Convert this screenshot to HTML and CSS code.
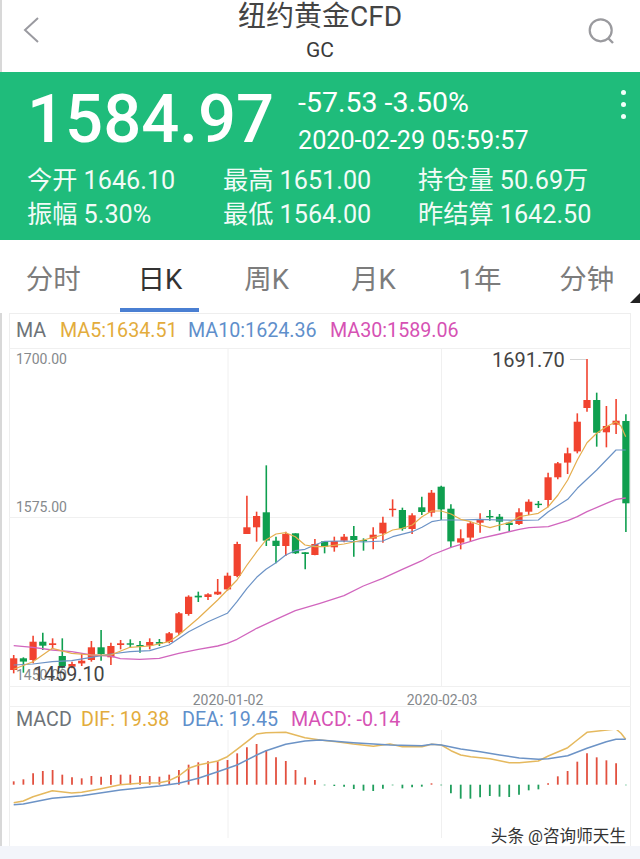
FILE: index.html
```html
<!DOCTYPE html>
<html lang="zh">

<head>
	<meta charset="utf-8">
	<title>纽约黄金CFD</title>
	<link rel="stylesheet" href="styles.css">
</head>

<body>
	<div class="cabecera">
		<svg class="icono" width="44" height="44" viewBox="0 0 44 44">
			<path d="M28 9 L15 21 L28 33" fill="none" stroke="#9A9AA0" stroke-width="2"/>
		</svg>
		<div class="titulo">
			<div class="nombre">纽约黄金CFD</div>
			<div class="codigo">GC</div>
		</div>
		<svg class="icono" width="44" height="44" viewBox="0 0 44 44">
			<circle cx="14.7" cy="21.3" r="11" fill="none" stroke="#9A9A9E" stroke-width="2.2"/>
			<path d="M22 29 L27 34" fill="none" stroke="#9A9A9E" stroke-width="2.4"/>
		</svg>
	</div>

	<div class="cotizacion">
		<div class="fila-precio">
			<div class="precio">1584.97</div>
			<div class="cambio">
				<div class="variacion">-57.53 -3.50%</div>
				<div class="fecha">2020-02-29 05:59:57</div>
			</div>
			<div class="puntos"><i></i><i></i><i></i></div>
		</div>
		<div class="datos">
			<div>今开 1646.10</div>
			<div>最高 1651.00</div>
			<div>持仓量 50.69万</div>
			<div>振幅 5.30%</div>
			<div>最低 1564.00</div>
			<div>昨结算 1642.50</div>
		</div>
	</div>

	<div class="pestanas">
		<div>分时</div>
		<div class="activa">日K</div>
		<div>周K</div>
		<div>月K</div>
		<div>1年</div>
		<div>分钟</div>
		<span class="esquina"></span>
	</div>

	<div class="zona">
		<div class="tarjeta">
			<div class="leyenda ma">
				<span class="gris">MA</span>
				<span class="naranja">MA5:1634.51</span>
				<span class="azul">MA10:1624.36</span>
				<span class="rosa">MA30:1589.06</span>
			</div>
			<svg id="velas" class="grafico" width="622" height="359" viewBox="9 348 622 359"></svg>
			<div class="leyenda macd">
				<span class="gris">MACD</span>
				<span class="naranja">DIF: 19.38</span>
				<span class="azul">DEA: 19.45</span>
				<span class="rosa">MACD: -0.14</span>
			</div>
			<svg id="macd" class="grafico" width="622" height="108" viewBox="9 730 622 108"></svg>
			<div class="marca">头条 @咨询师天生</div>
		</div>
	</div>

	<script src="chart.js"></script>
</body>

</html>
```

FILE: styles.css
```css
body {
	margin: 0;
	width: 640px;
	height: 859px;
	overflow: hidden;
	background-color: #F3F5FA;
	color: #333333;
	font-family: Roboto, "Noto Sans CJK SC", sans-serif;
}

.cabecera {
	height: 72px;
	display: flex;
	justify-content: space-between;
	align-items: flex-start;
	padding: 0 10px 0 8px;
	background-color: #FFFFFF;
	border-left: 2px solid #D8D8D8;
	box-sizing: border-box;
}

.icono {
	margin-top: 9px;
}

.titulo {
	text-align: center;
}

.nombre {
	font-size: 28px;
	line-height: 34px;
	color: #444444;
}

.codigo {
	font-size: 21px;
	line-height: 33px;
	color: #3A3A3A;
}

.cotizacion {
	height: 168px;
	box-sizing: border-box;
	padding: 8px 0 0 27px;
	background-color: #1FBC7B;
	color: #FFFFFF;
}

.fila-precio {
	display: flex;
	height: 80px;
}

.precio {
	width: 271px;
	font-size: 67px;
	font-weight: 500;
	line-height: 78px;
}

.cambio {
	width: 323px;
	padding-top: 3px;
}

.variacion {
	font-size: 28.5px;
	line-height: 40px;
}

.fecha {
	font-size: 25.2px;
	line-height: 35px;
}

.puntos {
	display: flex;
	flex-direction: column;
	gap: 7px;
	padding-top: 10px;
}

.puntos i {
	display: block;
	width: 5px;
	height: 5px;
	border-radius: 50%;
	background-color: #F2FFF9;
}

.datos {
	display: grid;
	grid-template-columns: 196px 195px 1fr;
	grid-auto-rows: 34px;
	margin-top: 4px;
	font-size: 25.2px;
	line-height: 34px;
	color: #F2FBF7;
}

.pestanas {
	position: relative;
	height: 73px;
	display: grid;
	grid-template-columns: repeat(6, 1fr);
	background-color: #FFFFFF;
	font-size: 27.5px;
	line-height: 80px;
	text-align: center;
	color: #7C7C7C;
}

.pestanas .activa {
	color: #333333;
}

.pestanas .activa::after {
	content: "";
	display: block;
	width: 79px;
	height: 4px;
	margin: -12px auto 0;
	background-color: #4A7FD2;
}

.esquina {
	position: absolute;
	right: 0;
	bottom: 10px;
	border-left: 10px solid transparent;
	border-bottom: 10px solid #222222;
}

.zona {
	height: 533px;
	box-sizing: border-box;
	padding: 0 9px 0 7px;
	background-color: #FFFFFF;
	border-left: 2px solid #D8D8D8;
}

.tarjeta {
	position: relative;
	height: 533px;
	box-sizing: border-box;
	border: 1px solid #EEEEEE;
	border-bottom: 0;
	background-color: #FFFFFF;
}

.leyenda {
	display: flex;
	padding-left: 6px;
	font-size: 19.7px;
	white-space: nowrap;
}

.leyenda.ma {
	height: 34px;
	line-height: 34px;
}

.leyenda.macd {
	height: 23px;
	line-height: 26px;
}

.ma .gris { width: 44px; }
.ma .naranja { width: 128px; }
.ma .azul { width: 142px; }

.macd .gris { width: 65px; }
.macd .naranja { width: 101px; }
.macd .azul { width: 109px; }

.gris { color: #6E7378; }
.naranja { color: #E3AC3C; }
.azul { color: #5F8FCB; }
.rosa { color: #D652B4; }

.grafico {
	display: block;
	margin-left: -1px;
}

.grafico text {
	font-family: Roboto, sans-serif;
}

.marca {
	position: absolute;
	right: 4px;
	bottom: -1px;
	font-size: 16.6px;
	line-height: 20px;
	color: #333333;
	text-shadow: 0 0 2px #FFFFFF;
}
```

FILE: chart.js
```js
// coordenadas leidas de la imagen, escala x3
var PASO = 29.15;
var ROJO = "#F1432F", VERDE = "#0F9F4F";

// [r/v, mecha arriba, mecha abajo, cuerpo arriba, cuerpo abajo]
var velas = [
	["r",945,1000,955,990],["v",952,998,955,965],["r",887,970,905,960],["v",878,930,905,917],
	["r",895,925,910,915],["v",895,985,948,978],["r",965,985,972,980],["r",940,978,962,970],
	["r",903,965,922,960],["v",870,962,922,942],["r",908,975,918,952],["r",900,928,910,915],
	["v",898,922,910,914],["v",903,938,915,920],["r",895,928,906,917],["v",897,918,906,911],
	["r",876,910,880,906],["r",816,885,820,878],["r",766,827,770,822],["v",755,786,767,772],
	["r",760,780,763,771],["r",717,765,755,763],["r",698,752,707,748],["r",605,712,612,708],
	["r",467,582,562,582],["r",515,605,528,562],["v",376,618,517,602],["v",590,670,602,618],
	["r",575,648,582,618],["v",580,642,580,640],["v",637,688,637,642],["r",597,646,612,645],
	["v",604,640,604,620],["r",590,635,603,622],["r",582,607,590,602],["v",558,650,588,600],
	["v",595,632,600,604],["r",562,628,584,596],["r",530,608,548,580],["r",478,530,506,509],
	["v",503,572,510,566],["r",520,582,526,567],["v",470,525,502,516],["r",450,530,458,518],
	["v",437,540,440,508],["v",493,622,506,604],["r",568,628,595,608],["r",545,605,550,593],
	["r",520,578,537,548],["v",510,542,528,531],["v",522,572,530,545],["v",545,575,548,555],
	["r",505,555,517,552],["r",478,525,485,515],["v",483,504,491,495],["r",398,502,412,480],
	["r",366,418,370,412],["r",323,402,340,368],["r",220,340,245,334],["r",57,215,180,204],
	["v",158,320,180,278],["r",198,322,258,277],["r",177,282,242,254],["v",223,576,243,490]
];

var ma5 = [41,988,99,965,157,925,215,940,274,945,332,945,390,922,449,918,507,905,536,885,595,835,653,780,711,720,741,675,770,635,798,600,828,582,857,578,886,590,915,615,944,620,974,620,1032,612,1090,600,1148,585,1178,570,1207,565,1237,555,1266,530,1295,513,1324,513,1353,522,1382,538,1412,545,1441,555,1470,563,1499,555,1528,548,1558,530,1587,525,1615,520,1645,500,1674,465,1703,420,1732,360,1761,308,1790,280,1819,260,1848,245,1863,258,1877,290];
var ma10 = [41,975,99,972,157,965,215,962,274,952,332,942,390,935,449,932,507,915,566,875,624,845,682,820,711,785,741,745,770,712,798,688,828,668,857,645,886,632,915,628,944,615,974,604,1032,603,1090,606,1148,603,1178,590,1237,575,1266,562,1295,545,1324,540,1382,540,1441,538,1499,540,1558,541,1615,540,1645,515,1703,478,1732,445,1790,390,1848,330,1877,330];
var ma30 = [41,917,99,922,157,930,215,935,274,945,332,948,361,956,419,958,478,955,536,940,595,928,653,918,682,910,711,898,770,865,828,838,886,812,960,790,1032,767,1090,738,1148,715,1207,688,1266,662,1295,645,1353,622,1412,604,1441,595,1499,582,1558,568,1587,563,1645,560,1703,542,1732,530,1761,515,1819,490,1848,478,1877,474];

// barras macd: valor superior o inferior respecto a la base 254
var barras = [244,238,220,213,210,224,232,235,228,230,225,224,224,228,228,230,224,210,194,187,184,184,180,160,142,132,150,172,183,210,232,240,
	256,258,260,267,272,273,266,256,265,262,260,250,256,280,296,296,292,288,290,291,284,271,268,250,229,213,185,160,172,181,190,256];
var dif = [41,308,70,303,99,290,157,272,215,279,245,277,303,266,361,254,419,250,478,248,507,242,536,228,566,205,595,195,653,183,682,170,711,148,741,125,770,102,798,98,857,97,886,105,915,113,960,120,1010,125,1060,132,1120,139,1170,132,1207,140,1266,140,1295,133,1324,135,1353,152,1382,165,1412,170,1470,176,1528,188,1558,188,1615,183,1645,168,1703,143,1732,120,1761,97,1848,87,1863,100,1877,118];
var dea = [41,314,70,312,157,295,245,287,361,270,478,258,536,250,595,235,653,215,711,195,770,165,798,152,857,133,915,123,960,120,1060,128,1170,135,1266,137,1295,133,1324,135,1382,147,1441,155,1499,165,1558,174,1615,178,1645,176,1703,167,1761,145,1819,125,1848,118,1877,118];

function px(v) { return (v / 3).toFixed(1); }

function linea(x1, y1, x2, y2, color, ancho) {
	return '<line x1="' + x1 + '" y1="' + y1 + '" x2="' + x2 + '" y2="' + y2 + '" stroke="' + color + '" stroke-width="' + ancho + '"/>';
}

function texto(x, y, t, tam, color, ancla) {
	return '<text x="' + x + '" y="' + y + '" font-size="' + tam + '" fill="' + color + '" text-anchor="' + (ancla || "start") + '">' + t + '</text>';
}

function curva(datos, base, color, ancho) {
	var p = [];
	for (var i = 0; i < datos.length; i += 2) {
		p.push(px(datos[i]) + "," + (base + datos[i + 1] / 3).toFixed(1));
	}
	return '<polyline points="' + p.join(" ") + '" fill="none" stroke="' + color + '" stroke-width="' + ancho + '" stroke-linejoin="round"/>';
}

function dibujaVelas() {
	var s = "";
	s += linea(9, 348.5, 631, 348.5, "#F0F0F0", 1);
	s += linea(9, 517.5, 631, 517.5, "#F0F0F0", 1);
	s += linea(9, 686.5, 631, 686.5, "#F0F0F0", 1);
	s += linea(9, 706.5, 631, 706.5, "#F0F0F0", 1);
	s += linea(228, 349, 228, 686, "#F0F0F0", 1);
	s += linea(441.5, 349, 441.5, 686, "#F0F0F0", 1);
	s += linea(570, 359.5, 586, 359.5, "#D5D5D5", 1);
	s += texto(16, 364, "1700.00", 14, "#85898C");
	s += texto(16, 512, "1575.00", 14, "#85898C");
	s += texto(16, 680, "1450.00", 14, "#85898C");
	s += texto(228, 705, "2020-01-02", 14, "#85898C", "middle");
	s += texto(442, 705, "2020-02-03", 14, "#85898C", "middle");

	for (var i = 0; i < velas.length; i++) {
		var v = velas[i];
		var x = 13.7 + i * PASO / 3;
		var y = 340;
		var c = v[0] == "r" ? ROJO : VERDE;
		s += linea(x.toFixed(1), y + v[1] / 3, x.toFixed(1), y + v[2] / 3, c, 1.6);
		s += '<rect x="' + (x - 3.6).toFixed(1) + '" y="' + (y + v[3] / 3).toFixed(1) + '" width="7.2" height="' + Math.max((v[4] - v[3]) / 3, 1.4).toFixed(1) + '" fill="' + c + '"/>';
	}

	s += curva(ma30, 340, "#D166BE", 1.3);
	s += curva(ma10, 340, "#6C93C6", 1.2);
	s += curva(ma5, 340, "#E5AE4E", 1.2);
	s += texto(33, 681, "1459.10", 19.7, "#444444");
	s += texto(492, 367, "1691.70", 20, "#444444");
	document.getElementById("velas").innerHTML = s;
}

function dibujaMacd() {
	var s = "";
	s += linea(228, 730, 228, 840, "#F0F0F0", 1);
	s += linea(441.5, 730, 441.5, 840, "#F0F0F0", 1);

	for (var i = 0; i < barras.length; i++) {
		var x = (13.7 + i * PASO / 3).toFixed(1);
		var c = barras[i] < 254 ? "#E2503F" : "#1F9E5C";
		s += linea(x, 700 + barras[i] / 3, x, 700 + 254 / 3, c, 1.8);
	}

	s += curva(dif, 700, "#E5B95E", 1.5);
	s += curva(dea, 700, "#6C93C6", 1.5);
	document.getElementById("macd").innerHTML = s;
}

dibujaVelas();
dibujaMacd();
```
